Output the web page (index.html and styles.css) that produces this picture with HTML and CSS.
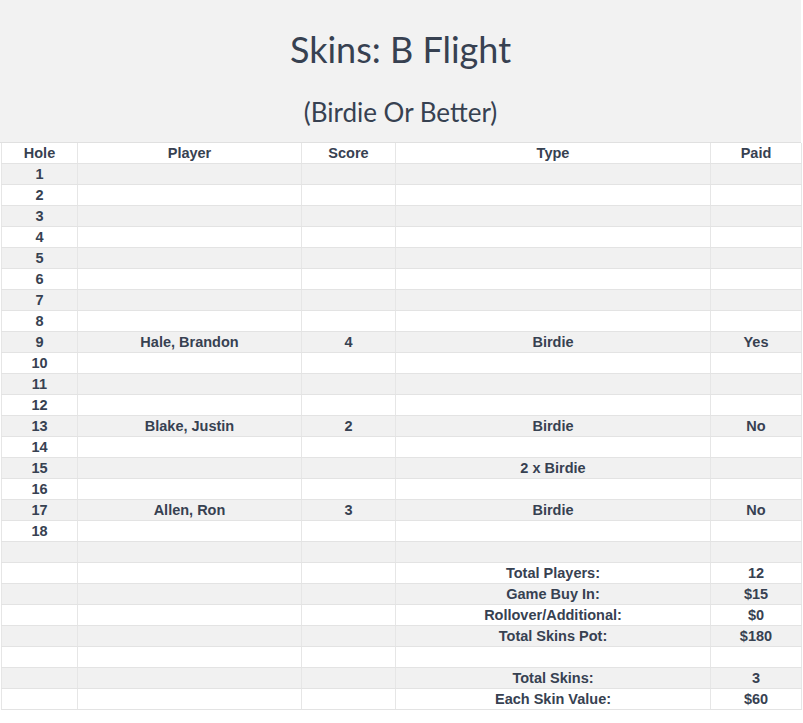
FILE: index.html
```html
<!DOCTYPE html>
<html>
<head>
<meta charset="utf-8">
<link rel="stylesheet" href="styles.css">
</head>
<body>
<div class="sheet">
  <header class="banner">
    <h1 class="title">Skins: B Flight</h1>
    <h2 class="subtitle">(Birdie Or Better)</h2>
  </header>
  <table class="skins">
    <colgroup>
      <col class="c-hole"><col class="c-player"><col class="c-score"><col class="c-type"><col class="c-paid">
    </colgroup>
    <thead>
      <tr><th>Hole</th><th>Player</th><th>Score</th><th>Type</th><th>Paid</th></tr>
    </thead>
    <tbody>
      <tr><td>1</td><td></td><td></td><td></td><td></td></tr>
      <tr><td>2</td><td></td><td></td><td></td><td></td></tr>
      <tr><td>3</td><td></td><td></td><td></td><td></td></tr>
      <tr><td>4</td><td></td><td></td><td></td><td></td></tr>
      <tr><td>5</td><td></td><td></td><td></td><td></td></tr>
      <tr><td>6</td><td></td><td></td><td></td><td></td></tr>
      <tr><td>7</td><td></td><td></td><td></td><td></td></tr>
      <tr><td>8</td><td></td><td></td><td></td><td></td></tr>
      <tr><td>9</td><td>Hale, Brandon</td><td>4</td><td>Birdie</td><td>Yes</td></tr>
      <tr><td>10</td><td></td><td></td><td></td><td></td></tr>
      <tr><td>11</td><td></td><td></td><td></td><td></td></tr>
      <tr><td>12</td><td></td><td></td><td></td><td></td></tr>
      <tr><td>13</td><td>Blake, Justin</td><td>2</td><td>Birdie</td><td>No</td></tr>
      <tr><td>14</td><td></td><td></td><td></td><td></td></tr>
      <tr><td>15</td><td></td><td></td><td>2 x Birdie</td><td></td></tr>
      <tr><td>16</td><td></td><td></td><td></td><td></td></tr>
      <tr><td>17</td><td>Allen, Ron</td><td>3</td><td>Birdie</td><td>No</td></tr>
      <tr><td>18</td><td></td><td></td><td></td><td></td></tr>
      <tr><td></td><td></td><td></td><td></td><td></td></tr>
      <tr><td></td><td></td><td></td><td>Total Players:</td><td>12</td></tr>
      <tr><td></td><td></td><td></td><td>Game Buy In:</td><td>$15</td></tr>
      <tr><td></td><td></td><td></td><td>Rollover/Additional:</td><td>$0</td></tr>
      <tr><td></td><td></td><td></td><td>Total Skins Pot:</td><td>$180</td></tr>
      <tr><td></td><td></td><td></td><td></td><td></td></tr>
      <tr><td></td><td></td><td></td><td>Total Skins:</td><td>3</td></tr>
      <tr><td></td><td></td><td></td><td>Each Skin Value:</td><td>$60</td></tr>
    </tbody>
  </table>
</div>
</body>
</html>
```
FILE: styles.css
```css
html, body {
  margin: 0;
  padding: 0;
  background: #ffffff;
}
.sheet {
  width: 801px;
  color: #374151;
}
.banner {
  background: #f2f2f2;
  height: 143px;
  border-bottom: 1px solid #e0e0e0;
  text-align: center;
  display: flex;
  flex-direction: column;
  align-items: center;
  box-sizing: border-box;
  padding-top: 27px;
}
.title {
  margin: 0;
  font-family: Lato, "Open Sans", sans-serif;
  font-weight: 400;
  font-size: 36px;
  line-height: 44px;
}
.subtitle {
  margin: 26px 0 0 0;
  font-family: Lato, "Open Sans", sans-serif;
  font-weight: 400;
  font-size: 26px;
  line-height: 30px;
}
.skins {
  margin-left: 1px;
  width: 800px;
  border-collapse: collapse;
  table-layout: fixed;
  font-family: "Liberation Sans", Arial, sans-serif;
  font-weight: 700;
  font-size: 14.5px;
}
.c-hole { width: 76px; }
.c-player { width: 224px; }
.c-score { width: 94px; }
.c-type { width: 315px; }
.c-paid { width: 91px; }
.skins th, .skins td {
  height: 20px;
  padding: 0;
  text-align: center;
  vertical-align: middle;
  border-left: 1px solid #e6e6e6;
  border-right: 1px solid #e6e6e6;
  border-bottom: 1px solid #e3e3e3;
  line-height: 20px;
}
.skins thead tr { background: #ffffff; }
.skins tbody tr:nth-child(odd) { background: #f1f1f1; }
.skins tbody tr:nth-child(even) { background: #ffffff; }
```
